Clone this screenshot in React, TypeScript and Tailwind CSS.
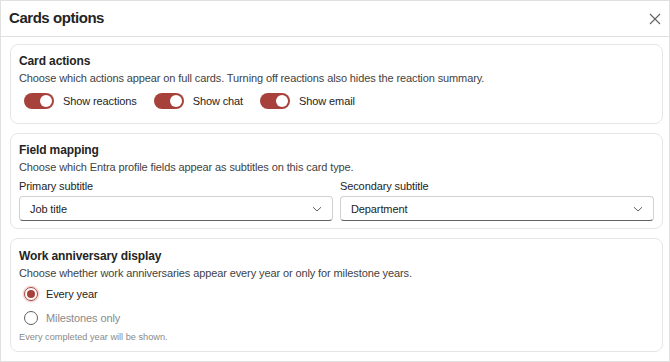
import { useState } from "react";

const RED = "bg-[#a6423b]";

function Toggle({ label, on }: { label: string; on: boolean }) {
  return (
    <div className="flex h-[16px] items-center gap-[9px]">
      <div
        className={`flex h-[16px] w-[30px] items-center rounded-full px-[2px] ${
          on ? `${RED} justify-end` : "justify-start border border-[#616161] bg-white"
        }`}
      >
        <div className="h-[12px] w-[12px] rounded-full bg-white" />
      </div>
      <span className="text-[11px] leading-[14px] tracking-[-0.01em] text-[#242424]">{label}</span>
    </div>
  );
}

function Select({ label, value }: { label: string; value: string }) {
  return (
    <div className="flex flex-1 flex-col gap-[3px]">
      <span className="text-[11px] leading-[14px] tracking-[-0.01em] text-[#242424]">{label}</span>
      <div className="flex h-[25px] items-center justify-between rounded-[4px] border border-[#d1d1d1] border-b-[#616161] pl-[10px] pr-[9px]">
        <span className="text-[11px] leading-[14px] tracking-[-0.01em] text-[#242424]">{value}</span>
        <svg width="12" height="12" viewBox="0 0 12 12" fill="none">
          <path d="M2 4.2 6 8l4-3.8" stroke="#616161" strokeWidth="1" />
        </svg>
      </div>
    </div>
  );
}

function Radio({ label, checked, onClick }: { label: string; checked: boolean; onClick: () => void }) {
  return (
    <button onClick={onClick} className="flex h-[14px] items-center gap-[8px] pl-[5px] text-left">
      {checked ? (
        <span className="flex h-[14px] w-[14px] items-center justify-center rounded-full border border-[#a6423b] shadow-[0_0_0_1.5px_#f3d7d4]">
          <span className={`h-[8px] w-[8px] rounded-full ${RED}`} />
        </span>
      ) : (
        <span className="h-[14px] w-[14px] rounded-full border border-[#616161]" />
      )}
      <span
        className={`text-[11px] leading-[14px] tracking-[-0.01em] ${
          checked ? "text-[#242424]" : "text-[#8a8a8a]"
        }`}
      >
        {label}
      </span>
    </button>
  );
}

function Card({
  title,
  desc,
  children,
  className = "",
}: {
  title: string;
  desc: string;
  children: React.ReactNode;
  className?: string;
}) {
  return (
    <section className={`rounded-[8px] border border-[#e6e6e6] bg-white px-[8px] ${className}`}>
      <h3 className="text-[12px] font-bold leading-[16px] tracking-[-0.01em] text-[#242424]">{title}</h3>
      <p className="mt-[2px] text-[11px] leading-[14px] tracking-[-0.01em] text-[#424242]">{desc}</p>
      {children}
    </section>
  );
}

export default function App() {
  const [mode, setMode] = useState("every");

  return (
    <div
      className="flex h-[362px] w-[670px] flex-col overflow-hidden border border-[#e0e0e0] bg-white"
      style={{ fontFamily: '"Liberation Sans", Arial, sans-serif' }}
    >
      {/* Header */}
      <div className="flex h-[36px] shrink-0 items-center justify-between border-b border-[#e0e0e0] pl-[8px] pr-[7px]">
        <h2 className="text-[15px] font-bold tracking-[-0.03em] text-[#242424]">Cards options</h2>
        <svg width="14" height="14" viewBox="0 0 14 14" fill="none">
          <path d="M2 2l10 10M12 2 2 12" stroke="#616161" strokeWidth="1.1" />
        </svg>
      </div>

      {/* Body */}
      <div className="flex flex-col gap-[9px] pl-[9px] pr-[6px] pt-[7px]">
        <Card
          title="Card actions"
          desc="Choose which actions appear on full cards. Turning off reactions also hides the reaction summary."
          className="pt-[8px] pb-[14px]"
        >
          <div className="mt-[8px] flex items-center gap-[17px] pl-[5px]">
            <Toggle label="Show reactions" on />
            <Toggle label="Show chat" on />
            <Toggle label="Show email" on />
          </div>
        </Card>

        <Card
          title="Field mapping"
          desc="Choose which Entra profile fields appear as subtitles on this card type."
          className="pt-[8px] pb-[7px]"
        >
          <div className="mt-[5px] flex gap-[7px]">
            <Select label="Primary subtitle" value="Job title" />
            <Select label="Secondary subtitle" value="Department" />
          </div>
        </Card>

        <Card
          title="Work anniversary display"
          desc="Choose whether work anniversaries appear every year or only for milestone years."
          className="pt-[9px] pb-[8px]"
        >
          <div className="mt-[7px] flex flex-col gap-[10px]">
            <Radio label="Every year" checked={mode === "every"} onClick={() => setMode("every")} />
            <Radio
              label="Milestones only"
              checked={mode === "milestones"}
              onClick={() => setMode("milestones")}
            />
          </div>
          <p className="mt-[6px] text-[9.2px] leading-[12px] text-[#8a8a8a]">
            {mode === "every" ? "Every completed year will be shown." : "Only milestone years will be shown."}
          </p>
        </Card>
      </div>
    </div>
  );
}
